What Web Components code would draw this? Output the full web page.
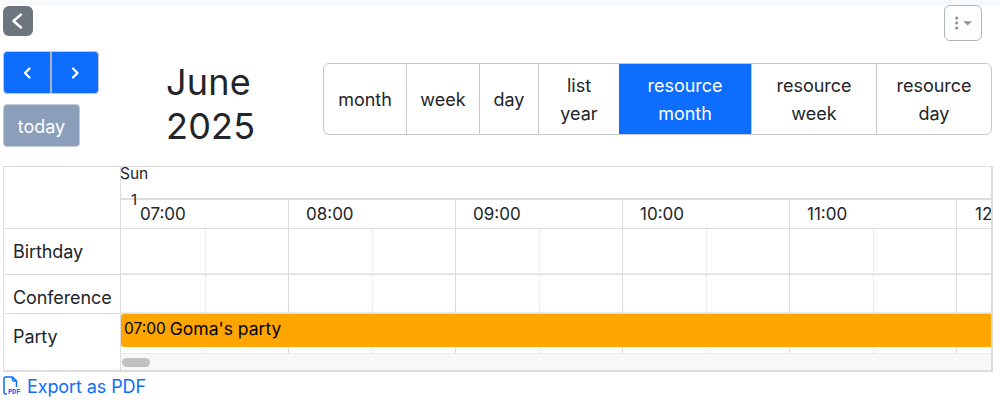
<!DOCTYPE html>
<html lang="en">
<head>
<meta charset="utf-8">
<title>June 2025</title>
<style>
  html, body { margin: 0; padding: 0; background: #fff; }
  body { font-family: Inter, "Liberation Sans", sans-serif; color: #212529; width: 1000px; height: 406px; overflow: hidden; }
</style>
</head>
<body>
<top-bar></top-bar>
<cal-toolbar></cal-toolbar>
<timeline-view>
  <resource-row name="Birthday" height="46"></resource-row>
  <resource-row name="Conference" height="39"></resource-row>
  <resource-row name="Party" height="56" scrollbar event-time="07:00" event-title="Goma's party"></resource-row>
</timeline-view>
<export-link></export-link>

<script>
// top-bar: franja gris, boton volver y menu de tres puntos
class TopBar extends HTMLElement {
  constructor() {
    super();
    this.attachShadow({ mode: 'open' }).innerHTML = `
      <style>
        :host { display: block; height: 51px; box-sizing: border-box; border-top: 5px solid #f8f9fa; }
        .row { display: flex; justify-content: space-between; align-items: flex-start; padding: 0 18px 0 3px; }
        .back { width: 30px; height: 30px; margin-top: 1px; border-radius: 6px; background: #6c757d; display: grid; place-items: center; }
        .menu { width: 38px; height: 36px; box-sizing: border-box; border: 1px solid #adb5bd; border-radius: 6px; display: flex; align-items: center; justify-content: center; }
      </style>
      <div class="row">
        <div class="back">
          <svg width="16" height="18" viewBox="0 0 16 18"><path d="M11 2.500 L3.500 9 L11 15.500" fill="none" stroke="#fff" stroke-width="2.400" stroke-linecap="round" stroke-linejoin="round"/></svg>
        </div>
        <div class="menu">
          <svg width="20" height="14" viewBox="0 0 20 14">
            <circle cx="3.700" cy="2" r="1.600" fill="#8d949b"/><circle cx="3.700" cy="7" r="1.600" fill="#8d949b"/><circle cx="3.700" cy="12" r="1.600" fill="#8d949b"/>
            <path d="M10.300 5.200 H19 L14.650 9.400 Z" fill="#8d949b"/>
          </svg>
        </div>
      </div>`;
  }
}
customElements.define('top-bar', TopBar);

// cal-toolbar: navegacion, titulo y selector de vistas
class CalToolbar extends HTMLElement {
  constructor() {
    super();
    const views = [
      ['month', 82], ['week', 73], ['day', 59], ['list<br>year', 81],
      ['resource<br>month', 132, true], ['resource<br>week', 125], ['resource<br>day', 115]
    ];
    this.attachShadow({ mode: 'open' }).innerHTML = `
      <style>
        :host { display: block; height: 115px; }
        .bar { display: flex; padding-left: 3px; }
        .left { width: 163px; display: flex; flex-direction: column; gap: 10px; }
        .nav { display: flex; width: 96px; height: 43px; box-sizing: border-box; border: 1px solid #c3cad2; border-radius: 4px; background: #0d6efd; overflow: hidden; }
        .nav div { display: grid; place-items: center; }
        .nav div:first-child { width: 46px; }
        .nav div + div { flex: 1; border-left: 2px solid #aab4c0; }
        .today { width: 77px; height: 43px; box-sizing: border-box; border: 1px solid #c3cad2; border-radius: 4px; background: #8c9fba; color: #fff; font-size: 18px; padding-top: 1px; display: grid; place-items: center; }
        h2 { margin: 9px 0 0; width: 157px; font-size: 36px; font-weight: 400; line-height: 44px; letter-spacing: 0.200px; }
        .views { display: flex; height: 72px; margin-top: 12px; box-sizing: border-box; border: 1px solid #c6c9cc; border-radius: 6px; overflow: hidden; }
        .view { box-sizing: border-box; display: grid; place-items: center; text-align: center; font-size: 18px; line-height: 28px; padding-top: 1px; color: #212529; }
        .view + .view { border-left: 1px solid #c6c9cc; }
        .view.active { background: #0d6efd; color: #fff; border-left: 0; }
      </style>
      <div class="bar">
        <div class="left">
          <div class="nav">
            <div><svg width="12" height="14" viewBox="0 0 12 14"><path d="M8.500 2.500 L4 7 L8.500 11.500" fill="none" stroke="#fff" stroke-width="2.300" stroke-linecap="round" stroke-linejoin="round"/></svg></div>
            <div><svg width="12" height="14" viewBox="0 0 12 14"><path d="M4 2.500 L8.500 7 L4 11.500" fill="none" stroke="#fff" stroke-width="2.300" stroke-linecap="round" stroke-linejoin="round"/></svg></div>
          </div>
          <div class="today">today</div>
        </div>
        <h2>June 2025</h2>
        <div class="views">
          ${views.map(([label, width, active]) => `<div class="view${active ? ' active' : ''}" style="width:${width}px">${label}</div>`).join('')}
        </div>
      </div>`;
  }
}
customElements.define('cal-toolbar', CalToolbar);

// timeline-view: tabla con recursos a la izquierda y horas arriba
const hours = ['07:00', '08:00', '09:00', '10:00', '11:00', '12:00'];

class TimelineView extends HTMLElement {
  constructor() {
    super();
    this.attachShadow({ mode: 'open' }).innerHTML = `
      <style>
        :host { display: block; width: 990px; height: 206px; margin-left: 3px; box-sizing: border-box; border: 1px solid #ddd; border-width: 1px 2px 2px 1px; overflow: hidden; }
        .head { display: grid; grid-template-columns: 117px 1fr; height: 62px; box-sizing: border-box; border-bottom: 1px solid #ddd; }
        .corner { border-right: 1px solid #ddd; }
        .right { min-width: 0; }
        .day { height: 33px; box-sizing: border-box; border-bottom: 2px solid #ddd; font-size: 15.500px; line-height: 14px; position: relative; }
        .day span { display: block; margin-left: -1px; }
        .day b { position: absolute; left: 10px; top: 26px; font-weight: 400; line-height: 14px; font-size: 15px; }
        .hours { display: flex; height: 28px; overflow: hidden; }
        .hour { flex: 0 0 167px; box-sizing: border-box; border-right: 1px solid #ddd; padding: 5px 0 0 17px; font-size: 17px; line-height: 18px; white-space: nowrap; }
        .hour:first-child { flex-basis: 168px; padding-left: 19px; }
        .hour:last-child { border-right: 0; padding-left: 18px; }
      </style>
      <div class="head">
        <div class="corner"></div>
        <div class="right">
          <div class="day"><span>Sun</span><b>1</b></div>
          <div class="hours">${hours.map((h) => `<div class="hour">${h}</div>`).join('')}</div>
        </div>
      </div>
      <slot></slot>`;
  }
}
customElements.define('timeline-view', TimelineView);

class ResourceRow extends HTMLElement {
  connectedCallback() {
    if (this.shadowRoot) return;
    const height = this.getAttribute('height');
    const time = this.getAttribute('event-time');
    const title = this.getAttribute('event-title');
    const scrollbar = this.hasAttribute('scrollbar');
    const cells = hours.map(() => '<div class="slot"><div class="half"></div><div class="half"></div></div>').join('');
    this.attachShadow({ mode: 'open' }).innerHTML = `
      <style>
        :host { display: block; }
        .row { display: grid; grid-template-columns: 117px 1fr; height: ${height}px; box-sizing: border-box; border-bottom: ${scrollbar ? '0' : '1px solid #ddd'}; }
        .name { border-right: 1px solid #ddd; box-sizing: border-box; padding: 10px 0 0 9px; font-size: 18px; line-height: 26px; letter-spacing: -0.100px; }
        .side { min-width: 0; display: flex; flex-direction: column; }
        .track { flex: 1; position: relative; overflow: hidden; min-height: 0; ${scrollbar ? '' : 'box-shadow: inset 0 -1px #ececec;'} }
        .slots { display: flex; height: 100%; }
        .slot { flex: 0 0 167px; box-sizing: border-box; border-right: 1px solid #ddd; display: flex; }
        .slot:first-child { flex-basis: 168px; padding-left: 1px; }
        .half { flex: 0 0 84px; box-sizing: border-box; border-right: 1px dotted #ddd; }
        .half + .half { flex: 1; border-right: 0; }
        .event { position: absolute; left: 0; right: 0; top: 0; height: 33px; box-sizing: border-box; padding: 0 0 4px 3px; background: #ffa500; color: #000; display: flex; align-items: center; gap: 4px; font-size: 17.500px; white-space: nowrap; border-radius: 3px 0 0 3px; }
        .event small { font-size: 15.500px; }
        .scroll { height: 17px; box-sizing: border-box; border-top: 1px solid #ebebeb; background: #f8f8f8; padding: 4px 0 0 1px; }
        .scroll i { display: block; width: 28px; height: 9px; border-radius: 5px; background: #c1c1c1; }
      </style>
      <div class="row">
        <div class="name">${this.getAttribute('name')}</div>
        <div class="side">
          <div class="track">
            <div class="slots">${cells}</div>
            ${title ? `<div class="event"><small>${time}</small><span>${title}</span></div>` : ''}
          </div>
          ${scrollbar ? '<div class="scroll"><i></i></div>' : ''}
        </div>
      </div>`;
  }
}
customElements.define('resource-row', ResourceRow);

class ExportLink extends HTMLElement {
  constructor() {
    super();
    this.attachShadow({ mode: 'open' }).innerHTML = `
      <style>
        :host { display: flex; align-items: center; gap: 4px; height: 28px; padding-left: 3px; color: #0d6efd; font-size: 18px; letter-spacing: -0.100px; }
        svg { flex: none; }
        svg text { font: 700 7px "Liberation Mono", monospace; }
      </style>
      <svg width="20" height="20" viewBox="0 0 20 20">
        <path d="M1 15 V2.500 A1.500 1.500 0 0 1 2.500 1 H9.500 L13.500 5 V11 M9.500 1 V3.500 A1.500 1.500 0 0 0 11 5 H13.500 M1 15 V16.500 A1.500 1.500 0 0 0 2.500 18 H4" fill="none" stroke="#0d6efd" stroke-width="1.500" stroke-linejoin="round"/>
        <text x="5" y="18" fill="#0d6efd">PDF</text>
      </svg>
      <span>Export as PDF</span>`;
  }
}
customElements.define('export-link', ExportLink);
</script>
</body>
</html>
